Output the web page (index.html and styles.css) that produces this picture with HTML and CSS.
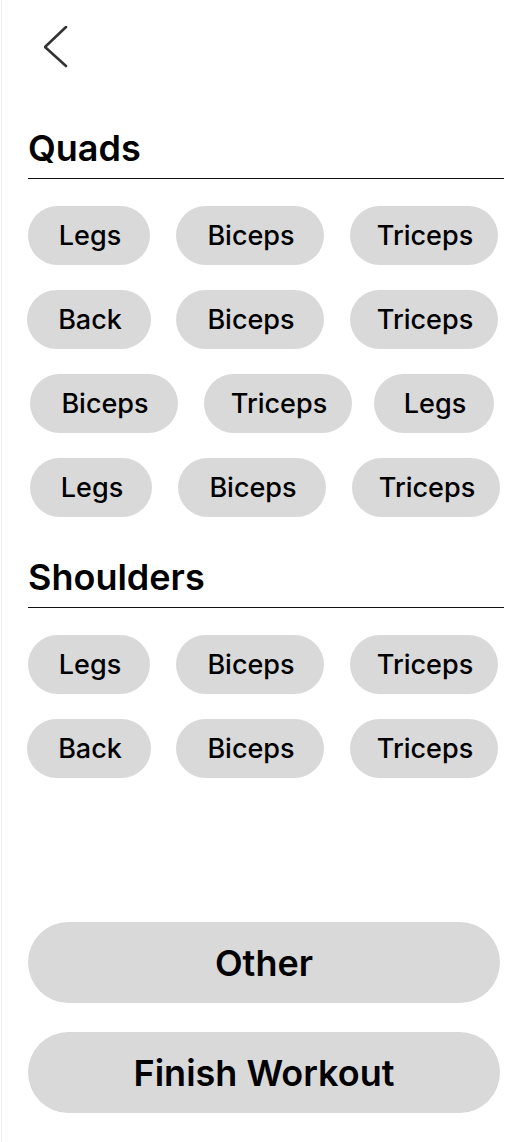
FILE: index.html
```html
<!DOCTYPE html>
<html lang="en">
<head>
  <meta charset="UTF-8">
  <meta name="viewport" content="width=device-width, initial-scale=1.0">
  <link rel="stylesheet" href="styles.css">
</head>
<body>
  <div class="screen">
    <a href="#" class="back" aria-label="Back">
      <svg width="24" height="42" viewBox="0 0 24 42">
        <polyline points="22,1 1,21 22,40" fill="none" stroke="#333" stroke-width="2.6" stroke-linecap="round" stroke-linejoin="round"/>
      </svg>
    </a>

    <section class="group">
      <h2>Quads</h2>
      <div class="chips">
        <div class="row">
          <button class="chip short">Legs</button>
          <button class="chip">Biceps</button>
          <button class="chip">Triceps</button>
        </div>
        <div class="row">
          <button class="chip short wide">Back</button>
          <button class="chip">Biceps</button>
          <button class="chip">Triceps</button>
        </div>
        <div class="row shift">
          <button class="chip">Biceps</button>
          <button class="chip">Triceps</button>
          <button class="chip short tight">Legs</button>
        </div>
        <div class="row shift">
          <button class="chip short">Legs</button>
          <button class="chip">Biceps</button>
          <button class="chip">Triceps</button>
        </div>
      </div>
    </section>

    <section class="group">
      <h2>Shoulders</h2>
      <div class="chips">
        <div class="row">
          <button class="chip short">Legs</button>
          <button class="chip">Biceps</button>
          <button class="chip">Triceps</button>
        </div>
        <div class="row">
          <button class="chip short wide">Back</button>
          <button class="chip">Biceps</button>
          <button class="chip">Triceps</button>
        </div>
      </div>
    </section>

    <div class="actions">
      <button class="big-btn">Other</button>
      <button class="big-btn">Finish Workout</button>
    </div>
  </div>
</body>
</html>
```

FILE: styles.css
```css
body {
  margin: 0;
  font-family: Inter, "Noto Sans", sans-serif;
  color: #000;
  background: #fff;
}

.screen {
  box-sizing: border-box;
  width: 523px;
  height: 1142px;
  margin-left: 1px;
  border-left: 1px solid #f0f0f0;
  padding: 26px 20px 29px 26px;
  display: flex;
  flex-direction: column;
}

.back {
  display: block;
  width: 24px;
  height: 42px;
  margin-left: 16px;
}

.back svg {
  display: block;
}

.group h2 {
  margin: 0;
  font-size: 36px;
  font-weight: 600;
  line-height: 40px;
  padding-bottom: 10px;
  border-bottom: 1px solid #111;
}

.group:first-of-type h2 {
  margin-top: 60px;
}

.group + .group h2 {
  margin-top: 40px;
}

.chips {
  display: flex;
  flex-direction: column;
  gap: 25px;
  margin-top: 27px;
}

.row {
  display: flex;
  gap: 26px;
}

.row.shift {
  padding-left: 2px;
}

.chip {
  box-sizing: border-box;
  width: 148px;
  height: 59px;
  border: none;
  border-radius: 30px;
  background: #d9d9d9;
  font-family: inherit;
  font-size: 27px;
  font-weight: 500;
  color: #000;
  padding: 0 0 0 2px;
}

.chip.short {
  width: 122px;
}

.chip.wide {
  width: 124px;
  margin-left: -1px;
  margin-right: -1px;
}

.chip.tight {
  width: 120px;
  margin-left: -4px;
}

.actions {
  margin-top: auto;
  display: flex;
  flex-direction: column;
  gap: 29px;
}

.big-btn {
  box-sizing: border-box;
  width: 472px;
  height: 81px;
  border: none;
  border-radius: 41px;
  background: #d9d9d9;
  font-family: inherit;
  font-size: 36px;
  font-weight: 600;
  color: #000;
}
```
